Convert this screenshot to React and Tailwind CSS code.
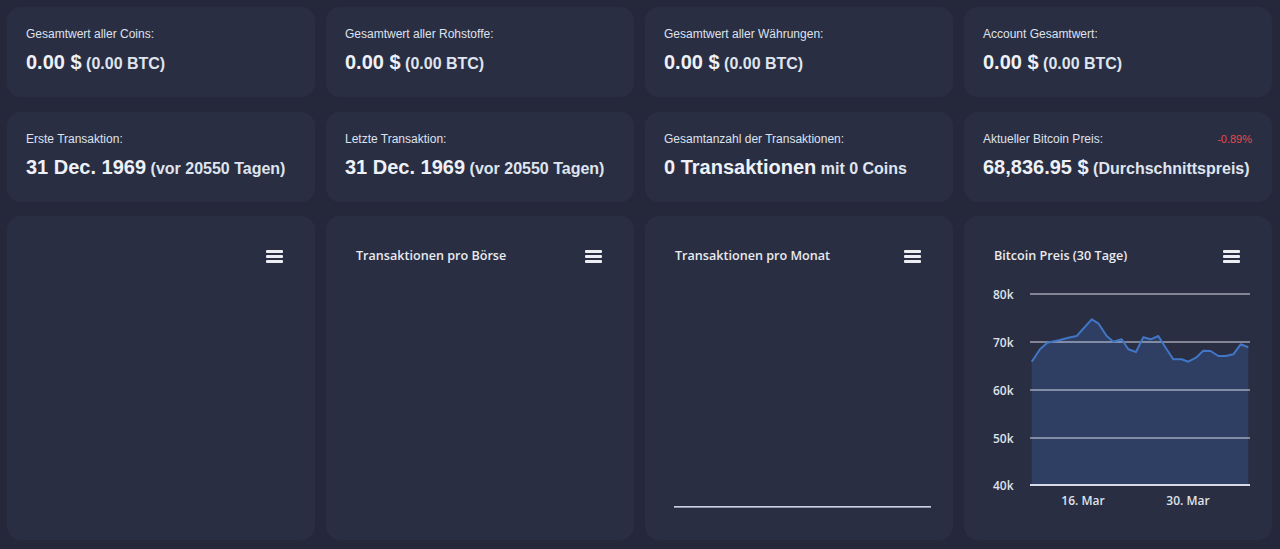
const top = [
  { label: "Gesamtwert aller Coins:", main: "0.00 $", sub: "(0.00 BTC)" },
  { label: "Gesamtwert aller Rohstoffe:", main: "0.00 $", sub: "(0.00 BTC)" },
  { label: "Gesamtwert aller Währungen:", main: "0.00 $", sub: "(0.00 BTC)" },
  { label: "Account Gesamtwert:", main: "0.00 $", sub: "(0.00 BTC)" },
];

const second = [
  { label: "Erste Transaktion:", main: "31 Dec. 1969", sub: "(vor 20550 Tagen)" },
  { label: "Letzte Transaktion:", main: "31 Dec. 1969", sub: "(vor 20550 Tagen)" },
  { label: "Gesamtanzahl der Transaktionen:", main: "0 Transaktionen", sub: "mit 0 Coins" },
  { label: "Aktueller Bitcoin Preis:", main: "68,836.95 $", sub: "(Durchschnittspreis)", change: "-0.89%" },
];

// price points, traced in card pixels
const pts = [
  [215, 455], [240, 418], [262, 398], [300, 390], [325, 383], [350, 378], [395, 328],
  [415, 340], [440, 378], [460, 395], [485, 388], [505, 418], [528, 426], [550, 382],
  [572, 388], [595, 378], [618, 415], [640, 448], [665, 448], [685, 455], [708, 443],
  [730, 422], [752, 423], [775, 438], [797, 438], [820, 433], [842, 403], [865, 412],
].map(([x, y]) => [x / 3 - 4, y / 3 + 210 - 280]);

function StatCard({ item }) {
  return (
    <div className="rounded-[14px] bg-[#2a2e42] pl-[19px] pr-5 pt-5 pb-[23px] h-[90px]">
      <div className="flex justify-between items-center h-[14px]">
        <span className="text-[12px] leading-[14px] text-[#dde2ee]">{item.label}</span>
        {item.change && <span className="text-[11px] text-[#e5484d]">{item.change}</span>}
      </div>
      <div className="mt-[9px] leading-[24px] font-bold text-[#eef1f7] whitespace-nowrap">
        <span className="text-[20px]">{item.main}</span>{" "}
        <span className="text-[16px] text-[#dfe4ee]">{item.sub}</span>
      </div>
    </div>
  );
}

function Burger() {
  return (
    <div className="flex flex-col gap-[2px] w-[17px]">
      <div className="h-[3px] bg-[#eceef4] rounded-[1px]" />
      <div className="h-[3px] bg-[#eceef4] rounded-[1px]" />
      <div className="h-[3px] bg-[#eceef4] rounded-[1px]" />
    </div>
  );
}

function ChartCard({ title, children }) {
  return (
    <div className="rounded-[14px] bg-[#2a2e42] h-[324px] flex flex-col">
      <div className="flex items-center justify-between pl-[30px] pr-[32px] pt-[32px] h-[48px]">
        <span className="font-['Open_Sans'] font-semibold text-[12.6px] text-[#e8eaf0]">{title}</span>
        <Burger />
      </div>
      {children}
    </div>
  );
}

function BtcChart() {
  const line = pts.map(([x, y], i) => `${i ? "L" : "M"}${x.toFixed(1)} ${y.toFixed(1)}`).join(" ");
  const area = `${line} L${pts[pts.length - 1][0].toFixed(1)} 205 L${pts[0][0].toFixed(1)} 205 Z`;
  const grid = [
    ["80k", 14],
    ["70k", 62],
    ["60k", 110],
    ["50k", 158],
    ["40k", 205],
  ];
  return (
    <svg width="308" height="260" className="mt-[16px] block" style={{ fontFamily: "'Open Sans', sans-serif" }}>
      <path d={area} fill="#2f3e63" />
      {grid.map(([t, y]) => (
        <g key={t}>
          <line x1="66" x2="286" y1={y} y2={y} stroke="#d6dae6" strokeWidth={t === "40k" ? 2 : 1} />
          <text x="29" y={y + 5} fontSize="12" fontWeight="600" fill="#dfe2ea">{t}</text>
        </g>
      ))}
      <path d={line} fill="none" stroke="#4176c6" strokeWidth="2" strokeLinejoin="round" />
      <text x="119" y="225" fontSize="12" fontWeight="600" fill="#dfe2ea" textAnchor="middle">16. Mar</text>
      <text x="224" y="225" fontSize="12" fontWeight="600" fill="#dfe2ea" textAnchor="middle">30. Mar</text>
    </svg>
  );
}

export default function App() {
  return (
    <div className="min-h-[549px] bg-[#25283a] pt-[7px] pl-[7px] pr-[8px] pb-[9px] font-['Liberation_Sans',Arial,sans-serif]">
      <div className="grid grid-cols-4 gap-x-[11px]">
        {top.map((t) => (
          <StatCard key={t.label} item={t} />
        ))}
      </div>
      <div className="grid grid-cols-4 gap-x-[11px] mt-[15px]">
        {second.map((t) => (
          <StatCard key={t.label} item={t} />
        ))}
      </div>
      <div className="grid grid-cols-4 gap-x-[11px] mt-[14px]">
        <ChartCard title="" />
        <ChartCard title="Transaktionen pro Börse" />
        <ChartCard title="Transaktionen pro Monat">
          <div className="mt-auto mb-[32px] ml-[29px] mr-[22px] h-[2px] bg-[#c9cee0] border-b border-[#8f96ad]" />
        </ChartCard>
        <ChartCard title="Bitcoin Preis (30 Tage)">
          <BtcChart />
        </ChartCard>
      </div>
    </div>
  );
}
